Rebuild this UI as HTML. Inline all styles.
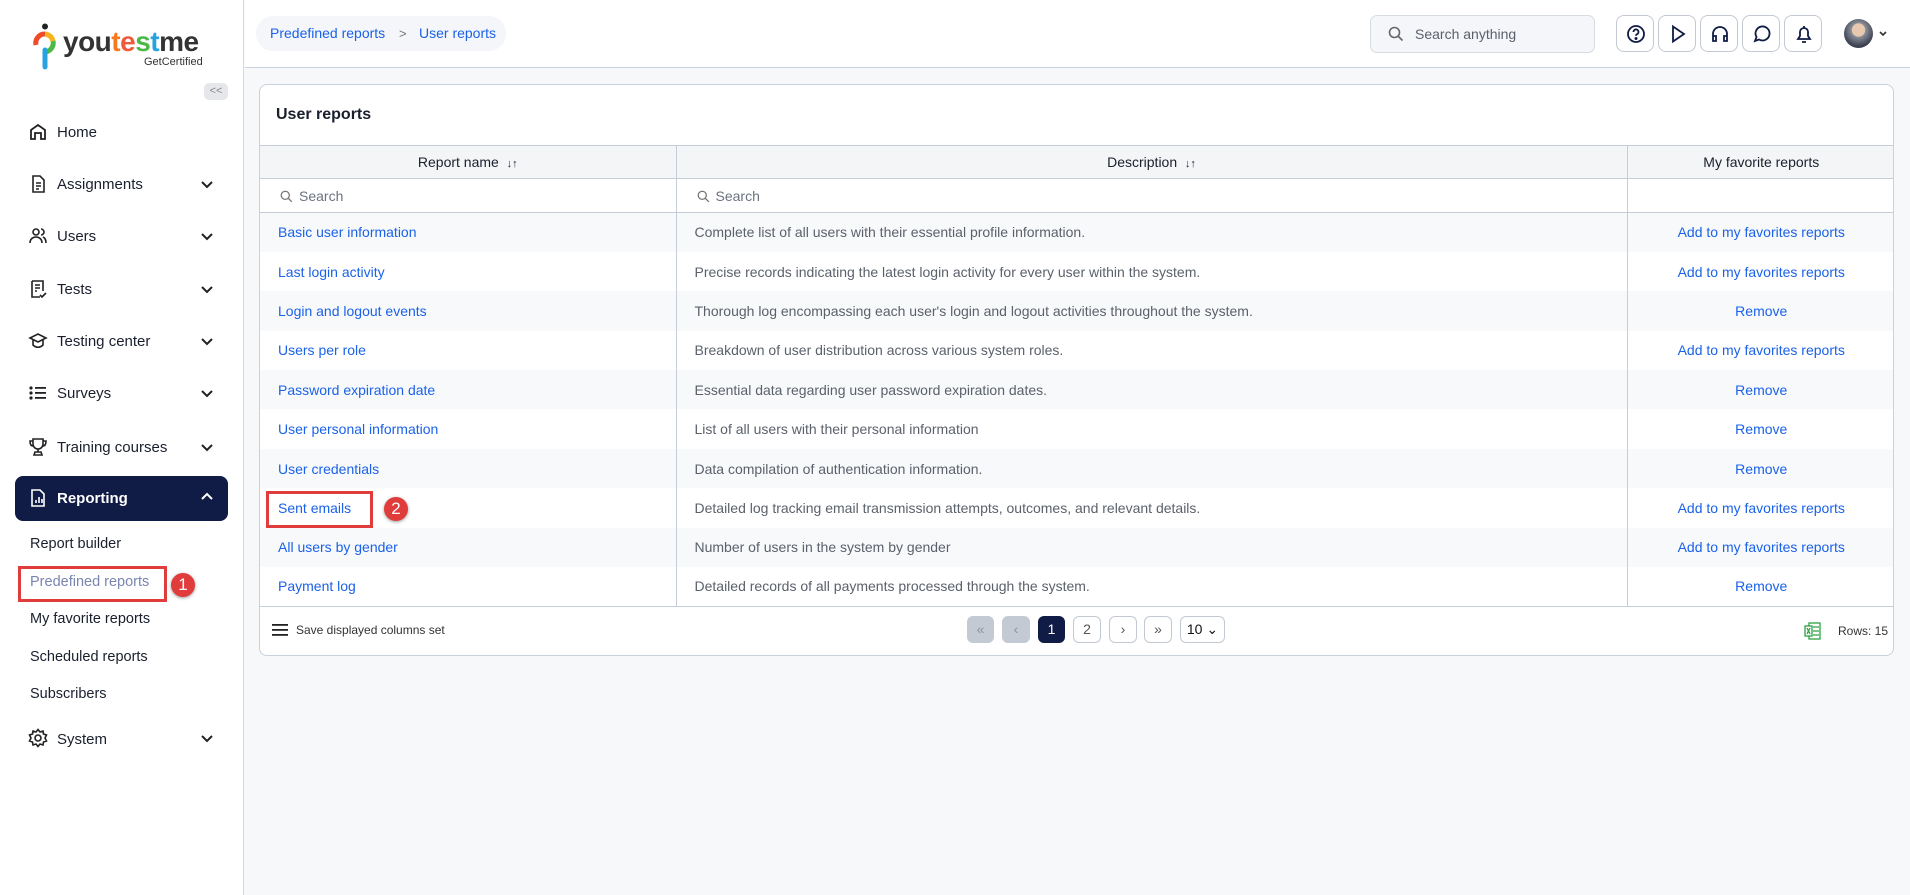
<!DOCTYPE html>
<html><head><meta charset="utf-8"><style>
*{box-sizing:border-box;margin:0;padding:0}
body{width:1910px;height:895px;overflow:hidden;background:#f7f8fa;font-family:"Liberation Sans",Arial,sans-serif;position:relative;color:#1a1f2e}
.sb{position:absolute;left:0;top:0;width:244px;height:895px;background:#fff;border-right:1px solid #d3d9e2}
.abs{position:absolute}
.nav{position:absolute;left:57px;font-size:15px;color:#1a1f2e;line-height:18px}
.ic{position:absolute;left:28px;width:20px;height:20px}
.chev{position:absolute;left:199px;width:16px;height:16px}
.sub{position:absolute;left:30px;font-size:14.5px;color:#1a1f2e}
.top{position:absolute;left:245px;top:0;right:0;height:68px;background:#fff;border-bottom:1px solid #c9d1dc}
.ibtn{position:absolute;top:15px;width:38px;height:37px;border:1px solid #c3c9d2;border-radius:8px;background:#fff}
.ibtn svg{position:absolute;left:9px;top:8px}
.card{position:absolute;left:259px;top:84px;width:1635px;height:572px;background:#fff;border:1px solid #c9d1dc;border-radius:8px;overflow:hidden}
table{border-collapse:collapse;position:absolute;left:0;top:60px;width:1635px;font-size:14px}
td,th{height:39.4px;padding:0 18px;border-right:1px solid #c5cdd8}
th{height:33px;background:#f4f5f7;font-weight:normal;color:#1a1f2e;border-top:1px solid #c5cdd8;border-bottom:1px solid #c5cdd8}
tr.s td{height:34px;border-bottom:1px solid #c5cdd8;color:#6b7280}
td:last-child,th:last-child{border-right:none;text-align:center}
tbody tr:nth-child(even) td{background:#f8f9fb}
.l{color:#1a62e8}
.d{color:#5b616b}
.pg{position:absolute;top:616px;height:27px;border:1px solid #c3c9d2;border-radius:6px;font-size:14px;text-align:center;line-height:25px;color:#555;background:#fff}
.red{position:absolute;border:3px solid #e03c3c}
.num{position:absolute;width:24px;height:24px;border-radius:50%;background:#e03c3c;color:#fff;font-size:17px;text-align:center;line-height:24px;box-shadow:0 1px 3px rgba(0,0,0,.4)}
.mg{display:inline-block;vertical-align:-2px;margin-right:6px}
</style></head><body>
<div class="sb">
 <svg class="abs" style="left:33px;top:23px" width="24" height="48" viewBox="0 0 24 48"><circle cx="12" cy="3.5" r="3" fill="#222"/><path d="M3 22 A9 9 0 0 1 12 11" stroke="#f04a2a" stroke-width="5" fill="none"/><path d="M12 11 A9 9 0 0 1 20 18" stroke="#f6b31b" stroke-width="5" fill="none"/><path d="M20 18 A9 9 0 0 1 12 29" stroke="#4cb848" stroke-width="5" fill="none"/><path d="M12 27 L12 44" stroke="#29a3e0" stroke-width="5" stroke-linecap="round"/></svg>
 <div class="abs" style="left:63px;top:26px;font-size:28px;font-weight:bold;letter-spacing:-0.5px;color:#333">you<span style="color:#f57a1f">t</span><span style="color:#f05a3a">e</span><span style="color:#4cb848">s</span><span style="color:#29a3e0">t</span>me</div>
 <div class="abs" style="left:144px;top:56px;font-size:11px;color:#333">GetCertified</div>
 <div class="abs" style="left:204px;top:83px;width:24px;height:17px;background:#e5e7eb;border-radius:5px;font-size:11px;color:#888;text-align:center;line-height:17px">&lt;&lt;</div>

 <svg class="ic" style="top:122px" viewBox="0 0 20 20" fill="none" stroke="#222" stroke-width="1.8"><path d="M3 17V8l7-5 7 5v9h-4v-6H7v6z"/></svg><div class="nav" style="top:124px">Home</div>
 <svg class="ic" style="top:174px" viewBox="0 0 20 20" fill="none" stroke="#222" stroke-width="1.6"><path d="M5 2h7l4 4v12H5z M8 9h5M8 12h5M8 15h3"/></svg><div class="nav" style="top:176px">Assignments</div>
 <svg class="ic" style="top:226px" viewBox="0 0 20 20" fill="none" stroke="#222" stroke-width="1.6"><circle cx="8" cy="6" r="3"/><path d="M2 17c0-4 3-6 6-6s6 2 6 6M13 3a3 3 0 0 1 0 6M15 11c2 1 3 3 3 6"/></svg><div class="nav" style="top:228px">Users</div>
 <svg class="ic" style="top:279px" viewBox="0 0 20 20" fill="none" stroke="#222" stroke-width="1.6"><path d="M4 2h11v10M4 2v16h8M7 6h5M7 9h5M7 12h2M12 16l2 2 4-4"/></svg><div class="nav" style="top:281px">Tests</div>
 <svg class="ic" style="top:331px" viewBox="0 0 20 20" fill="none" stroke="#222" stroke-width="1.6"><path d="M2 7l8-4 8 4-8 4z M5 9v5c3 3 7 3 10 0V9"/></svg><div class="nav" style="top:333px">Testing center</div>
 <svg class="ic" style="top:383px" viewBox="0 0 20 20" fill="#222"><circle cx="3" cy="5" r="1.6"/><circle cx="3" cy="10" r="1.6"/><circle cx="3" cy="15" r="1.6"/><rect x="7" y="4" width="11" height="1.8"/><rect x="7" y="9" width="11" height="1.8"/><rect x="7" y="14" width="11" height="1.8"/></svg><div class="nav" style="top:385px">Surveys</div>
 <svg class="ic" style="top:437px" viewBox="0 0 20 20" fill="none" stroke="#222" stroke-width="1.6"><path d="M5 2h10v5a5 5 0 0 1-10 0z M5 4H2c0 3 1 5 3 5M15 4h3c0 3-1 5-3 5M10 12v3M6 18h8l-1-3H7z"/></svg><div class="nav" style="top:439px">Training courses</div>
 <svg class="chev" style="top:176px" viewBox="0 0 16 16" fill="none" stroke="#222" stroke-width="2"><path d="M3 6l5 5 5-5"/></svg>
 <svg class="chev" style="top:228px" viewBox="0 0 16 16" fill="none" stroke="#222" stroke-width="2"><path d="M3 6l5 5 5-5"/></svg>
 <svg class="chev" style="top:281px" viewBox="0 0 16 16" fill="none" stroke="#222" stroke-width="2"><path d="M3 6l5 5 5-5"/></svg>
 <svg class="chev" style="top:333px" viewBox="0 0 16 16" fill="none" stroke="#222" stroke-width="2"><path d="M3 6l5 5 5-5"/></svg>
 <svg class="chev" style="top:385px" viewBox="0 0 16 16" fill="none" stroke="#222" stroke-width="2"><path d="M3 6l5 5 5-5"/></svg>
 <svg class="chev" style="top:439px" viewBox="0 0 16 16" fill="none" stroke="#222" stroke-width="2"><path d="M3 6l5 5 5-5"/></svg>

 <div class="abs" style="left:15px;top:476px;width:213px;height:45px;background:#101c45;border-radius:8px"></div>
 <svg class="ic" style="top:488px" viewBox="0 0 20 20" fill="none" stroke="#fff" stroke-width="1.6"><path d="M4 2h8l4 4v12H4z M8 15v-3M11 15v-6M14 15v-4"/></svg><div class="nav" style="top:490px;color:#fff;font-weight:bold">Reporting</div>
 <svg class="chev" style="top:489px" viewBox="0 0 16 16" fill="none" stroke="#fff" stroke-width="2"><path d="M3 10l5-5 5 5"/></svg>

 <div class="sub" style="top:536px">Report builder</div>
 <div class="sub" style="top:574px;color:#7a85b0">Predefined reports</div>
 <div class="sub" style="top:611px">My favorite reports</div>
 <div class="sub" style="top:649px">Scheduled reports</div>
 <div class="sub" style="top:686px">Subscribers</div>
 <svg class="ic" style="top:728px" viewBox="0 0 20 20" fill="none" stroke="#222" stroke-width="1.6"><circle cx="10" cy="10" r="3"/><path d="M10 1.5l2 2.5 3-1 .5 3 3 1-1.5 3 1.5 3-3 1-.5 3-3-1-2 2.5-2-2.5-3 1-.5-3-3-1 1.5-3-1.5-3 3-1 .5-3 3 1z"/></svg><div class="nav" style="top:731px">System</div>
 <svg class="chev" style="top:730px" viewBox="0 0 16 16" fill="none" stroke="#222" stroke-width="2"><path d="M3 6l5 5 5-5"/></svg>
 <div class="red" style="left:18px;top:566px;width:149px;height:36px"></div>
 <div class="num" style="left:171px;top:573px">1</div>
</div>

<div class="top">
 <div class="abs" style="left:11px;top:16px;width:250px;height:35px;background:#f4f6f9;border-radius:17px"></div>
 <div class="abs" style="left:25px;top:25px;font-size:14px;color:#1a62e8">Predefined reports</div>
 <div class="abs" style="left:154px;top:26px;font-size:13px;color:#777">&gt;</div>
 <div class="abs" style="left:174px;top:25px;font-size:14px;color:#1a62e8">User reports</div>
 <div class="abs" style="left:1125px;top:15px;width:225px;height:38px;background:#f4f6f9;border:1px solid #d7dce3;border-radius:7px"></div>
 <svg class="abs" style="left:1143px;top:26px" width="16" height="16" viewBox="0 0 16 16" fill="none" stroke="#666" stroke-width="1.6"><circle cx="6.5" cy="6.5" r="5"/><path d="M10 10l4.5 4.5"/></svg>
 <div class="abs" style="left:1170px;top:26px;font-size:14px;color:#5b616b">Search anything</div>
 <div class="ibtn" style="left:1371px"><svg width="20" height="20" viewBox="0 0 20 20" fill="none" stroke="#101c45" stroke-width="1.8"><circle cx="10" cy="10" r="8"/><path d="M7.5 8a2.5 2.5 0 1 1 3.5 2.2c-.7.4-1 .8-1 1.6"/><circle cx="10" cy="14.5" r=".6" fill="#101c45"/></svg></div>
 <div class="ibtn" style="left:1413px"><svg width="20" height="20" viewBox="0 0 20 20" fill="none" stroke="#101c45" stroke-width="1.8"><path d="M5 2.5l11 7.5-11 7.5z"/></svg></div>
 <div class="ibtn" style="left:1455px"><svg width="20" height="20" viewBox="0 0 20 20" fill="none" stroke="#101c45" stroke-width="1.8"><path d="M3 14v-4a7 7 0 0 1 14 0v4M3 12h3v5H3zM14 12h3v5h-3z"/></svg></div>
 <div class="ibtn" style="left:1497px"><svg width="20" height="20" viewBox="0 0 20 20" fill="none" stroke="#101c45" stroke-width="1.8"><path d="M3 17l1.5-4A7 7 0 1 1 7 15.5z"/></svg></div>
 <div class="ibtn" style="left:1539px"><svg width="20" height="20" viewBox="0 0 20 20" fill="none" stroke="#101c45" stroke-width="1.8"><path d="M4 15h12l-2-3V8a4 4 0 0 0-8 0v4zM8 18h4M10 2v2"/></svg></div>
 <div class="abs" style="left:1599px;top:19px;width:29px;height:29px;border-radius:50%;background:radial-gradient(circle at 50% 38%,#e9c8b0 0 28%,#8a8f99 30%,#3b4150 70%)"></div>
 <svg class="abs" style="left:1633px;top:30px" width="10" height="8" viewBox="0 0 10 8" fill="none" stroke="#333" stroke-width="1.6"><path d="M2 2l3 3 3-3"/></svg>
</div>

<div class="card">
 <div class="abs" style="left:16px;top:21px;font-size:16px;font-weight:bold;color:#1a1f2e">User reports</div>
 <table>
  <colgroup><col style="width:416px"><col style="width:951px"><col></colgroup>
  <thead><tr><th>Report name&nbsp; <span style="font-size:11px">↓↑</span></th><th>Description&nbsp; <span style="font-size:11px">↓↑</span></th><th>My favorite reports</th></tr></thead>
  <tbody>
  <tr class="s"><td style="background:#fff;padding-left:20px"><svg class="mg" width="13" height="13" viewBox="0 0 16 16" fill="none" stroke="#777" stroke-width="1.6"><circle cx="6.5" cy="6.5" r="5"/><path d="M10 10l4.5 4.5"/></svg>Search</td><td style="background:#fff;padding-left:20px"><svg class="mg" width="13" height="13" viewBox="0 0 16 16" fill="none" stroke="#777" stroke-width="1.6"><circle cx="6.5" cy="6.5" r="5"/><path d="M10 10l4.5 4.5"/></svg>Search</td><td style="background:#fff"></td></tr>
  <tr><td class="l">Basic user information</td><td class="d">Complete list of all users with their essential profile information.</td><td class="l">Add to my favorites reports</td></tr>
  <tr><td class="l">Last login activity</td><td class="d">Precise records indicating the latest login activity for every user within the system.</td><td class="l">Add to my favorites reports</td></tr>
  <tr><td class="l">Login and logout events</td><td class="d">Thorough log encompassing each user's login and logout activities throughout the system.</td><td class="l">Remove</td></tr>
  <tr><td class="l">Users per role</td><td class="d">Breakdown of user distribution across various system roles.</td><td class="l">Add to my favorites reports</td></tr>
  <tr><td class="l">Password expiration date</td><td class="d">Essential data regarding user password expiration dates.</td><td class="l">Remove</td></tr>
  <tr><td class="l">User personal information</td><td class="d">List of all users with their personal information</td><td class="l">Remove</td></tr>
  <tr><td class="l">User credentials</td><td class="d">Data compilation of authentication information.</td><td class="l">Remove</td></tr>
  <tr><td class="l">Sent emails</td><td class="d">Detailed log tracking email transmission attempts, outcomes, and relevant details.</td><td class="l">Add to my favorites reports</td></tr>
  <tr><td class="l">All users by gender</td><td class="d">Number of users in the system by gender</td><td class="l">Add to my favorites reports</td></tr>
  <tr><td class="l" style="border-bottom:1px solid #c5cdd8">Payment log</td><td class="d" style="border-bottom:1px solid #c5cdd8">Detailed records of all payments processed through the system.</td><td class="l" style="border-bottom:1px solid #c5cdd8">Remove</td></tr>
  </tbody>
 </table>
 <div class="red" style="left:6px;top:406px;width:107px;height:37px"></div>
 <div class="num" style="left:124px;top:412px">2</div>
 <svg class="abs" style="left:12px;top:538px" width="16" height="14" viewBox="0 0 16 14" fill="#222"><rect y="1" width="16" height="1.8"/><rect y="6" width="16" height="1.8"/><rect y="11" width="16" height="1.8"/></svg>
 <div class="abs" style="left:36px;top:538px;font-size:12px;color:#333">Save displayed columns set</div>
</div>
<div class="pg" style="left:967px;width:27px;background:#c3cad4;border-color:#c3cad4;color:#8a93a0">«</div>
<div class="pg" style="left:1002px;width:28px;background:#c3cad4;border-color:#c3cad4;color:#8a93a0">‹</div>
<div class="pg" style="left:1038px;width:27px;background:#101c45;border-color:#101c45;color:#fff">1</div>
<div class="pg" style="left:1073px;width:28px">2</div>
<div class="pg" style="left:1109px;width:28px">›</div>
<div class="pg" style="left:1144px;width:28px">»</div>
<div class="pg" style="left:1180px;width:45px;color:#111">10 ⌄</div>
<svg class="abs" style="left:1804px;top:622px" width="17" height="18" viewBox="0 0 17 18" fill="none" stroke="#2ea043" stroke-width="1.3"><rect x="5" y="1" width="11" height="16"/><rect x="1" y="4" width="7" height="10" fill="#fff"/><path d="M3 6l3 6M6 6l-3 6M9 5h6M9 9h6M9 13h6"/></svg>
<div class="abs" style="left:1838px;top:624px;font-size:12px;color:#333">Rows: 15</div>
</body></html>
